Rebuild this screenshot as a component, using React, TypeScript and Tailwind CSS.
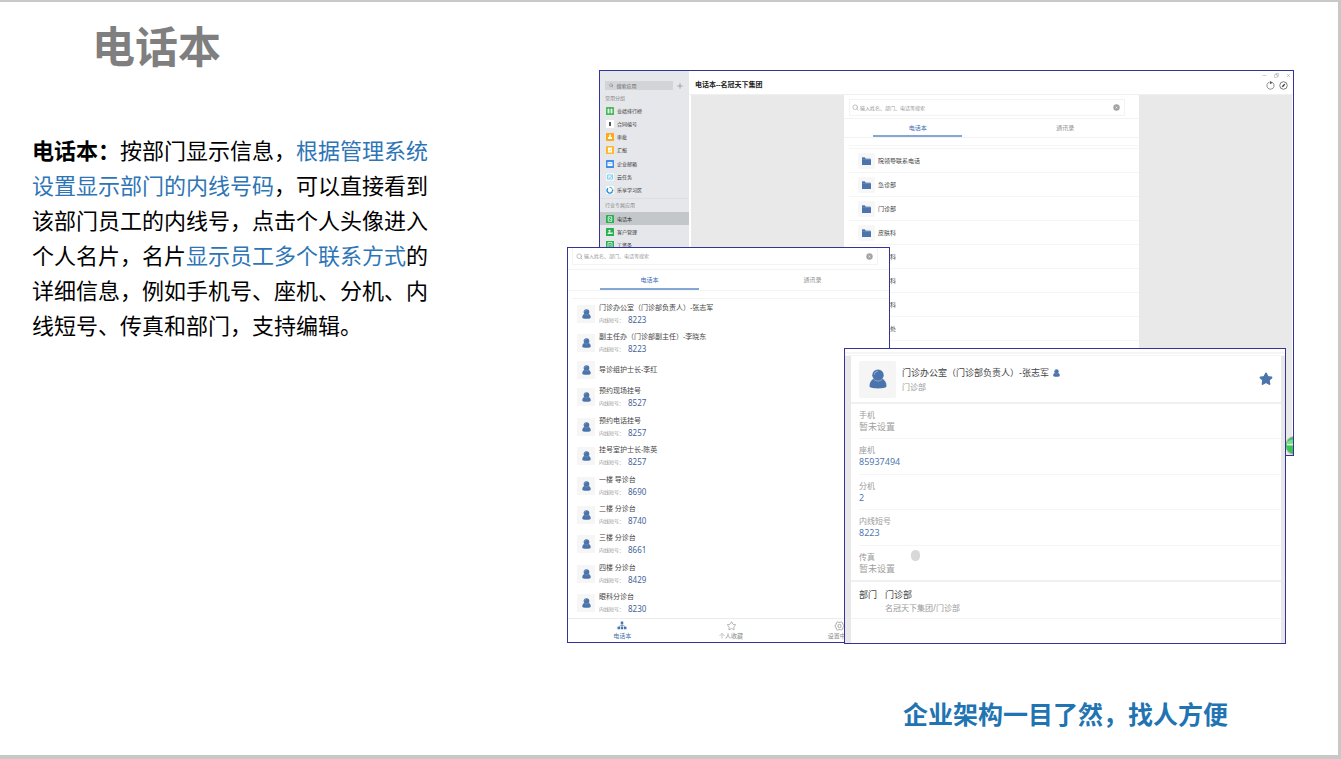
import { useState } from 'react';
import type { ReactNode } from 'react';
import { Search, Plus, Star, Minus, Copy, X } from 'lucide-react';

type Contact = { name: string; ext?: string };

const departments = ['院领导联系电话', '急诊部', '门诊部', '皮肤科', '口腔科', '骨伤科', '妇产科', '护理处', '信息处'];

const contacts: Contact[] = [
  { name: '门诊办公室（门诊部负责人）-张志军', ext: '8223' },
  { name: '副主任办（门诊部副主任）-李晓东', ext: '8223' },
  { name: '导诊组护士长-李红' },
  { name: '预约现场挂号', ext: '8527' },
  { name: '预约电话挂号', ext: '8257' },
  { name: '挂号室护士长-陈英', ext: '8257' },
  { name: '一楼 导诊台', ext: '8690' },
  { name: '二楼 分诊台', ext: '8740' },
  { name: '三楼 分诊台', ext: '8661' },
  { name: '四楼 分诊台', ext: '8429' },
  { name: '眼科分诊台', ext: '8230' },
];

const fields = [
  { label: '手机' },
  { label: '座机', value: '85937494' },
  { label: '分机', value: '2' },
  { label: '内线短号', value: '8223' },
  { label: '传真' },
];

function PersonIcon({ className }: { className: string }) {
  return (
    <svg viewBox="0 0 18 20" className={className} fill="#4a74ab" aria-hidden="true">
      <path d="M.5 17C.5 13 2.500 10.500 5.500 9.500h7c3 1 5 3.500 5 7.500 0 1.800-3 2.400-8.500 2.400S.5 18.800.5 17Z" />
      <ellipse cx="9" cy="6.200" rx="5.700" ry="5.800" />
      <path d="M4.800 10.200c2.200 2.400 6.200 2.400 8.400 0" fill="none" stroke="#b8cbe3" strokeWidth=".6" />
      <path d="M5.300 5.500C5.600 3.500 7 2.300 8.800 2.200" fill="none" stroke="#b8cbe3" strokeWidth=".8" />
    </svg>
  );
}

function FolderIcon() {
  return (
    <svg viewBox="0 0 18 16" className="w-[9px] h-2" aria-hidden="true">
      <path d="M0 1h6l2 2h9v2H0Z" fill="#7d9cc6" />
      <path d="M0 4.500h18V16H0Z" fill="#4a74ab" />
      <path d="M0 1h5.500l1.500 3.500H0Z" fill="#4a74ab" />
    </svg>
  );
}

function ClearIcon() {
  return (
    <svg viewBox="0 0 12 12" className="w-[7px] h-[7px]" aria-hidden="true">
      <circle cx="6" cy="6" r="5.500" fill="#a3a3a3" />
      <path d="M4.500 4.500l3 3M7.500 4.500l-3 3" stroke="#fff" strokeWidth="1" />
    </svg>
  );
}

function OrgIcon() {
  return (
    <svg viewBox="0 0 18 18" className="w-2.5 h-[9px]" fill="#4a74ab" aria-hidden="true">
      <path d="M6.500 1h5v5h-5ZM0 11.500h5v5H0ZM6.500 11.500h5v5h-5ZM13 11.500h5v5h-5Z" />
      <path d="M9 6v6M2.500 12L6 8.500h6l3.500 3.500" fill="none" stroke="#4a74ab" strokeWidth="1.400" />
    </svg>
  );
}

function SettingsIcon() {
  return (
    <svg viewBox="0 0 20 18" className="w-[11px] h-2.5" fill="none" stroke="#888" strokeWidth="1.300" aria-hidden="true">
      <path d="M6.500 1.500L8.500 2.500h3l2-1 2 1.500.5 2.500L18.500 9 16 12.500l-.5 2.500-2 1.500-2-1h-3l-2 1L4.500 15 4 12.500 1.500 9 4 5.500 4.500 3Z" />
      <circle cx="10" cy="9" r="3" />
    </svg>
  );
}

function AppIcon({ color, children }: { color: string; children?: ReactNode }) {
  return (
    <svg viewBox="0 0 16 16" className="w-2 h-2 shrink-0" aria-hidden="true">
      <rect width="16" height="16" rx="1" fill={color} />
      {children}
    </svg>
  );
}

const commonApps = [
  { name: '业绩排行榜', icon: <AppIcon color="#4cb85c"><path d="M3 4h4v8H3ZM9 4h4v8H9Z" fill="#c9ecce" /><path d="M5 3v10M11 3v10" stroke="#fff" strokeWidth="1.200" /></AppIcon> },
  { name: '合同编号', icon: <AppIcon color="#fff"><path d="M6.500 4h3v8h-3Z" fill="#222" /></AppIcon> },
  { name: '审批', icon: <AppIcon color="#fbab17"><path d="M6.500 3h3v5H12v4H4V8h2.500Z" fill="#fff" /></AppIcon> },
  { name: '汇报', icon: <AppIcon color="#fcb92f"><path d="M4 3h8v10H4Z" fill="#fff" /><path d="M6 8l2 2 2.500-4" fill="none" stroke="#fcb92f" strokeWidth="1.200" /></AppIcon> },
  { name: '企业邮箱', icon: <AppIcon color="#3f8ee8"><path d="M3 4h10v8H3Z" fill="#fff" /><path d="M3 5l5 3 5-3" fill="none" stroke="#3f8ee8" /></AppIcon> },
  { name: '云任务', icon: <AppIcon color="#e9f6fd"><path d="M3 4h10v8H3ZM5 8l2.500 2L13 5" fill="none" stroke="#6cc3f0" strokeWidth="1.500" /></AppIcon> },
  { name: '乐享学习区', icon: <AppIcon color="#fff"><path d="M4 4.500a5.500 5.500 0 1 0 9 2.500" fill="none" stroke="#1590e8" strokeWidth="2.800" /><path d="M7 3a5.500 5.500 0 0 1 5.500 3" fill="none" stroke="#46c8d8" strokeWidth="2.500" /><circle cx="12.500" cy="11.500" r="1.500" fill="#f59a23" /></AppIcon> },
];

const industryApps = [
  { name: '电话本', icon: <AppIcon color="#26b050"><path d="M4.500 3.500h7v9h-7Z" fill="none" stroke="#fff" strokeWidth="1.500" /><path d="M6.500 6l3 4" stroke="#fff" strokeWidth="1.500" /></AppIcon> },
  { name: '客户管理', icon: <AppIcon color="#26b050"><circle cx="7" cy="5.500" r="2.200" fill="#fff" /><path d="M3 12c0-5 8-5 8 0ZM11 8.500h2V12h-2Z" fill="#fff" /></AppIcon> },
  { name: '工资条', icon: <AppIcon color="#26b050"><path d="M4 3h8v10H4Z" fill="none" stroke="#fff" strokeWidth="1.500" /><path d="M6 7h4M6 10h4" stroke="#fff" /></AppIcon> },
];

function SearchBox({ className }: { className: string }) {
  return (
    <div className={`flex items-center gap-px pr-1 border-[#f3f3f3] ${className}`}>
      <Search className="w-[7px] h-[7px] text-[#9a9a9a]" strokeWidth={2} />
      <input
        type="text"
        aria-label="搜索联系人"
        placeholder="输入姓名、部门、电话等搜索"
        className="flex-1 min-w-0 h-3 text-[5px] leading-3 outline-none placeholder:text-[#999]"
      />
      <button aria-label="清除"><ClearIcon /></button>
    </div>
  );
}

function Tabs({ height, bar }: { height: string; bar: string }) {
  const [tab, setTab] = useState('电话本');
  return (
    <div className={`flex border-b border-[#f3f3f3] text-[6px] leading-2 ${height}`}>
      {['电话本', '通讯录'].map(name => (
        <button
          key={name}
          onClick={() => setTab(name)}
          className={`flex-1 flex flex-col items-center ${tab === name ? 'text-[#3f6fb5]' : 'text-[#8f8f8f]'}`}
        >
          <span className="flex-1 flex items-center pt-0.5">{name}</span>
          <span className={`h-0.5 ${bar} ${tab === name ? 'bg-[#86a6d3]' : ''}`} />
        </button>
      ))}
    </div>
  );
}

function AppLink({ name, icon, active }: { name: string; icon: ReactNode; active?: boolean }) {
  return (
    <li className={`flex-1 ${active ? 'bg-[#c4c7c9]' : ''}`}>
      <a href="#" className="h-full flex items-center gap-[3px] pl-1.5 text-[#333]">
        {icon}
        {name}
      </a>
    </li>
  );
}

function MainWindow() {
  return (
    <section className="ml-8 w-[695px] h-[386px] flex border border-[#333399] bg-white overflow-hidden">
      <nav className="w-[89px] shrink-0 bg-[#e5e7eb] pt-2.5 text-[5px] leading-2">
        <div className="flex items-center justify-between pl-[5px] pr-[5px]">
          <label className="w-17 h-[9px] flex items-center gap-[3px] pl-1 bg-[#d2d4d7]">
            <Search className="w-[5px] h-[5px] text-[#666]" />
            <input type="text" aria-label="搜索应用" placeholder="搜索应用" className="w-full h-2 outline-none placeholder:text-[#666]" />
          </label>
          <button aria-label="添加应用"><Plus className="w-2 h-2 text-[#888]" /></button>
        </div>
        <h3 className="mt-1 pl-[5px] text-[#888]">常用分组</h3>
        <ul className="mt-0.5 h-[93px] flex flex-col">
          {commonApps.map(app => <AppLink key={app.name} {...app} />)}
        </ul>
        <h3 className="mt-px pt-0.5 pb-[3px] pl-[5px] border-t border-[#dcdee2] text-[#888]">行业专属应用</h3>
        <ul className="h-10 flex flex-col">
          {industryApps.map(app => <AppLink key={app.name} {...app} active={app.name === '电话本'} />)}
        </ul>
      </nav>
      <div className="flex-1 flex flex-col">
        <header className="h-6 border-b border-[#f0f0f0]">
          <div className="h-2 flex items-center justify-end gap-[7px] pr-0.5 text-[#888]">
            <Minus className="w-[5px] h-[5px]" />
            <Copy className="w-[5px] h-[5px] -scale-x-100" />
            <X className="w-[5px] h-[5px]" />
          </div>
          <div className="h-3 flex items-center justify-between pl-1.5 pr-[5px]">
            <h2 className="text-[7px] leading-3 font-bold text-[#222]">电话本--名冠天下集团</h2>
            <div className="flex gap-1">
              <button aria-label="刷新">
                <svg viewBox="0 0 18 18" className="w-[9px] h-[9px]" fill="none" stroke="#555" strokeWidth="1.300">
                  <path d="M12 2.600a7.200 7.200 0 1 1-6 0" />
                  <path d="M8 1l4 2-3 3Z" fill="#333" />
                </svg>
              </button>
              <button aria-label="浏览">
                <svg viewBox="0 0 18 18" className="w-[9px] h-[9px]" fill="none" stroke="#555" strokeWidth="1.500">
                  <circle cx="9" cy="9" r="7.500" />
                  <path d="M13 5l-3 5.500L5 13l3-5.500Z" fill="#333" stroke="none" />
                </svg>
              </button>
            </div>
          </div>
        </header>
        <div className="relative flex-1 ml-0.5 mr-px bg-[#e9e9e9]">
          <div className="w-[295px] h-full mx-auto bg-white">
            <div className="pl-[5px] pt-1 pb-0.5 border-b border-[#f3f3f3]">
              <SearchBox className="w-[276px] h-[17px] pl-0.5 border" />
            </div>
            <Tabs height="h-[19px]" bar="w-[89px]" />
            <div className="ml-[5px] mt-[7px] h-1 border-y border-[#f5f5f5]" />
            <ul className="ml-[5px] text-[6px] leading-2 text-[#444]">
              {departments.map(name => (
                <li key={name} className="h-6 flex items-center gap-[3px] pl-[9px] border-b border-[#f5f5f5]">
                  <span className="w-[17px] h-4 flex items-center justify-center bg-[#f7f7f7] rounded-xs"><FolderIcon /></span>
                  {name}
                </li>
              ))}
            </ul>
          </div>
          <svg viewBox="0 0 20 20" className="absolute -right-3 bottom-0 w-[19px] h-[19px]" aria-hidden="true">
            <circle cx="10" cy="10" r="10" fill="#bdbdbd" />
            <circle cx="10" cy="10" r="9" fill="#3cc455" />
            <path d="M2 6Q10 1 18 6v4H2Z" fill="#7bdc8a" />
            <path d="M2 9h16" stroke="#d8f7dc" strokeWidth="1.500" />
          </svg>
        </div>
      </div>
    </section>
  );
}

function ContactWindow() {
  return (
    <section className="absolute left-0 top-[177px] w-[323px] h-[396px] border border-[#333399] bg-white overflow-hidden">
      <div className="w-[326px]">
        <div className="pl-1 pb-1 border-b border-[#f3f3f3]">
          <SearchBox className="w-[306px] h-[17px] pl-[3px] border-x border-b" />
        </div>
        <Tabs height="h-[21px]" bar="w-[99px]" />
        <div className="ml-1 h-2 border-b border-[#f3f3f3]" />
        <ul className="h-[319px] flex flex-col">
          {contacts.map(({ name, ext }) => (
            <li key={name} className={`${ext ? 'flex-[6]' : 'flex-[5]'} flex items-center gap-1 pl-[9px]`}>
              <span className="w-[18px] h-[18px] flex items-center justify-center bg-[#f6f6f6]">
                <PersonIcon className="w-[9px] h-2.5" />
              </span>
              <div>
                <p className="text-[7px] leading-3 text-[#444]">{name}</p>
                {ext && (
                  <p className="flex items-center text-[5px] leading-3 text-[#999]">
                    <span className="w-[29px]">内线短号：</span>
                    <a href={`tel:${ext}`} className="text-[8px] text-[#3f6399]">{ext}</a>
                  </p>
                )}
              </div>
            </li>
          ))}
        </ul>
        <nav className="flex border-t border-[#ececec] pt-0.5 text-[6px] leading-2 text-[#888]">
          <a href="#" className="flex-1 flex flex-col items-center text-[#4a74ab]">
            <span className="h-[11px]"><OrgIcon /></span>
            电话本
          </a>
          <a href="#" className="flex-1 flex flex-col items-center">
            <span className="h-[11px]"><Star className="w-[11px] h-2.5" strokeWidth={1.5} /></span>
            个人收藏
          </a>
          <a href="#" className="flex-1 flex flex-col items-center">
            <span className="h-[11px]"><SettingsIcon /></span>
            设置中心
          </a>
        </nav>
      </div>
    </section>
  );
}

function CardWindow() {
  return (
    <section className="absolute left-[277px] top-[278px] w-[442px] h-[296px] flex flex-col border border-[#333399] bg-white overflow-hidden">
      <div className="h-[7px] pt-[3px] border-b border-[#f5f5f5]">
        <div className="h-0.5 bg-[#f5f5f5]" />
      </div>
      <div className="flex-1 border-l-[6px] border-r-4 border-[#e8e8e8] text-[9px] leading-[13px]">
        <header className="h-12 flex items-center gap-1.5 px-2 border-b-2 border-[#f0f0f0]">
          <span className="w-[37px] h-[37px] flex items-center justify-center bg-[#f5f5f5] rounded-xs">
            <PersonIcon className="w-[18px] h-5" />
          </span>
          <div className="flex-1">
            <h2 className="flex items-center gap-1 leading-[14px] text-[#444]">
              门诊办公室（门诊部负责人）-张志军
              <PersonIcon className="w-[7px] h-2" />
            </h2>
            <p className="text-[8px] text-[#999]">门诊部</p>
          </div>
          <button aria-label="收藏">
            <Star className="w-3.5 h-3.5 text-[#4a74ab]" fill="currentColor" />
          </button>
        </header>
        <dl className="h-[178px] flex flex-col border-b-2 border-[#f0f0f0]">
          {fields.map(({ label, value }, i) => (
            <div key={label} className={`relative flex-1 ml-2 pt-[5px] border-[#f5f5f5] ${i < fields.length - 1 ? 'border-b' : ''}`}>
              <dt className="text-[8px] leading-[11px] text-[#999]">{label}</dt>
              <dd className={value ? 'text-[#4f78b0]' : 'text-[#a0a0a0]'}>{value ?? '暂未设置'}</dd>
              {label === '传真' && <span className="absolute left-[52px] top-1 w-[9px] h-[11px] rounded-full bg-[#d8d8d8]" />}
            </div>
          ))}
        </dl>
        <div className="flex gap-2 pl-2 pt-1.5 pb-1 border-b border-[#f3f3f3] text-[#444]">
          <span>部门</span>
          <div>
            <p>门诊部</p>
            <p className="text-[8px] text-[#999]">名冠天下集团/门诊部</p>
          </div>
        </div>
      </div>
    </section>
  );
}

export default function App() {
  return (
    <div className="min-h-screen flex bg-[#c8c8c8] pt-0.5 pr-[3px] pb-1 font-['Noto_Sans','Noto_Sans_CJK_SC',sans-serif]">
      <main className="flex-1 flex flex-col bg-white">
        <div className="flex justify-between pl-8 pr-11">
          <div className="w-[402px] pt-5">
            <h1 className="pl-[60px] text-[43px] leading-[50px] font-bold text-[#7f7f7f]">电话本</h1>
            <p className="mt-[61px] text-[22px] leading-[35px] text-black">
              <strong>电话本：</strong>按部门显示信息，<span className="text-[#2e75b6]">根据管理系统设置显示部门的内线号码</span>，可以直接看到该部门员工的内线号，点击个人头像进入个人名片，名片<span className="text-[#2e75b6]">显示员工多个联系方式</span>的详细信息，例如手机号、座机、分机、内线短号、传真和部门，支持编辑。
            </p>
          </div>
          <div className="relative shrink-0 w-[727px] pt-[68px]">
            <div className="relative h-[574px]">
              <MainWindow />
              <ContactWindow />
              <CardWindow />
            </div>
          </div>
        </div>
        <p className="mt-[52px] pr-[110px] text-right text-[25px] leading-9 font-bold text-[#1f74b1]">企业架构一目了然，找人方便</p>
      </main>
    </div>
  );
}
